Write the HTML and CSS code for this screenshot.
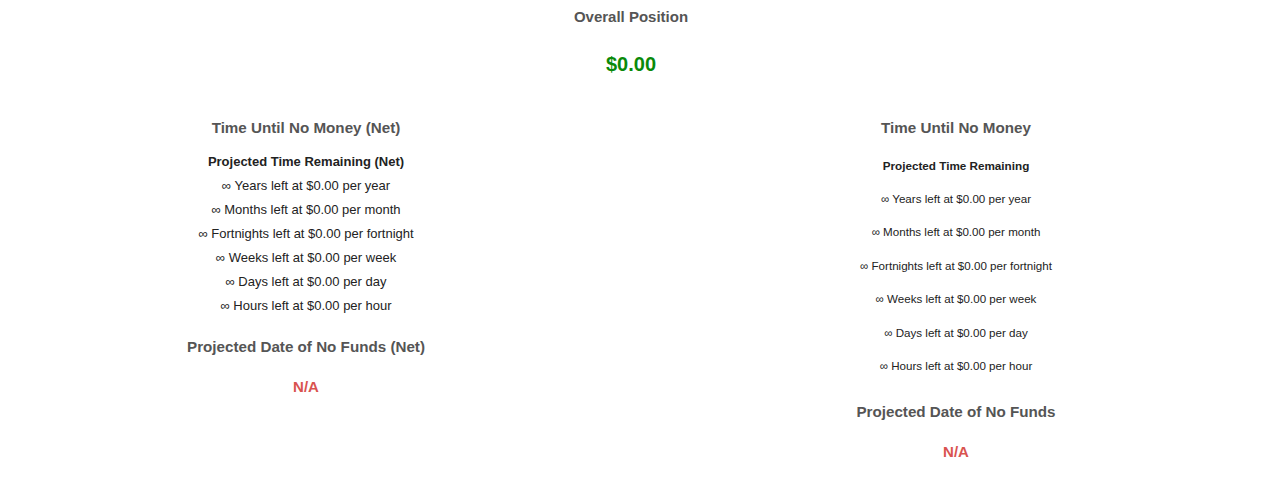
FILE: index.html
```html
<!DOCTYPE html>
<html lang="en">

<head>
    <meta charset="UTF-8">
    <meta name="viewport" content="width=device-width, initial-scale=1.0">
    <title>Overall Position</title>
    <link rel="stylesheet" href="styles.css">
</head>

<body>
    <div class="overall">
        <h2 class="title">Overall Position</h2>
        <p class="amount">$0.00</p>
    </div>

    <div class="columns">
        <div class="col col-net">
            <h3 class="head">Time Until No Money (Net)</h3>
            <h4 class="sub">Projected Time Remaining (Net)</h4>
            <ul class="list">
                <li>∞ Years left at $0.00 per year</li>
                <li>∞ Months left at $0.00 per month</li>
                <li>∞ Fortnights left at $0.00 per fortnight</li>
                <li>∞ Weeks left at $0.00 per week</li>
                <li>∞ Days left at $0.00 per day</li>
                <li>∞ Hours left at $0.00 per hour</li>
            </ul>
            <h3 class="head date">Projected Date of No Funds (Net)</h3>
            <p class="na">N/A</p>
        </div>

        <div class="col col-gross">
            <h3 class="head">Time Until No Money</h3>
            <h4 class="sub">Projected Time Remaining</h4>
            <ul class="list">
                <li>∞ Years left at $0.00 per year</li>
                <li>∞ Months left at $0.00 per month</li>
                <li>∞ Fortnights left at $0.00 per fortnight</li>
                <li>∞ Weeks left at $0.00 per week</li>
                <li>∞ Days left at $0.00 per day</li>
                <li>∞ Hours left at $0.00 per hour</li>
            </ul>
            <h3 class="head date">Projected Date of No Funds</h3>
            <p class="na">N/A</p>
        </div>
    </div>
</body>

</html>
```

FILE: styles.css
```css
* {
    box-sizing: border-box;
}

body {
    margin: 0;
    padding: 0 8px;
    font-family: "Liberation Sans", Arial, sans-serif;
    color: #222;
    background: #fff;
}

.overall {
    text-align: center;
    padding-right: 18px;
}

.title {
    margin: 0;
    padding-top: 8px;
    font-size: 15px;
    line-height: 18px;
    color: #555;
}

.amount {
    margin: 26px 0 0;
    font-size: 20px;
    line-height: 24px;
    font-weight: bold;
    color: #0a8a0a;
}

.columns {
    display: grid;
    grid-template-columns: 1fr 1fr;
    margin-top: 42px;
}

.col {
    text-align: center;
}

.col-net {
    padding-right: 36px;
}

.head {
    margin: 0;
    font-size: 15.2px;
    line-height: 20px;
    color: #555;
}

.sub {
    margin: 0;
    font-size: 13px;
    line-height: 16px;
    color: #222;
}

.list {
    list-style: none;
    margin: 0;
    padding: 0;
}

.na {
    margin: 0;
    font-size: 15px;
    font-weight: bold;
    color: #d9534f;
}

/* net column: tight rows */
.col-net .sub {
    margin-top: 16px;
}

.col-net .list {
    margin-top: 4px;
}

.col-net .list li {
    font-size: 13px;
    line-height: 24px;
}

.col-net .date {
    margin-top: 19px;
}

.col-net .na {
    margin-top: 21px;
}

/* gross column: spaced rows */
.col-gross .sub {
    margin-top: 20px;
    font-size: 11.7px;
}

.col-gross .list {
    margin-top: 8px;
}

.col-gross .list li {
    font-size: 11.6px;
    line-height: 33.4px;
}

.col-gross .date {
    margin-top: 20px;
}

.col-gross .na {
    margin-top: 21px;
}
```
